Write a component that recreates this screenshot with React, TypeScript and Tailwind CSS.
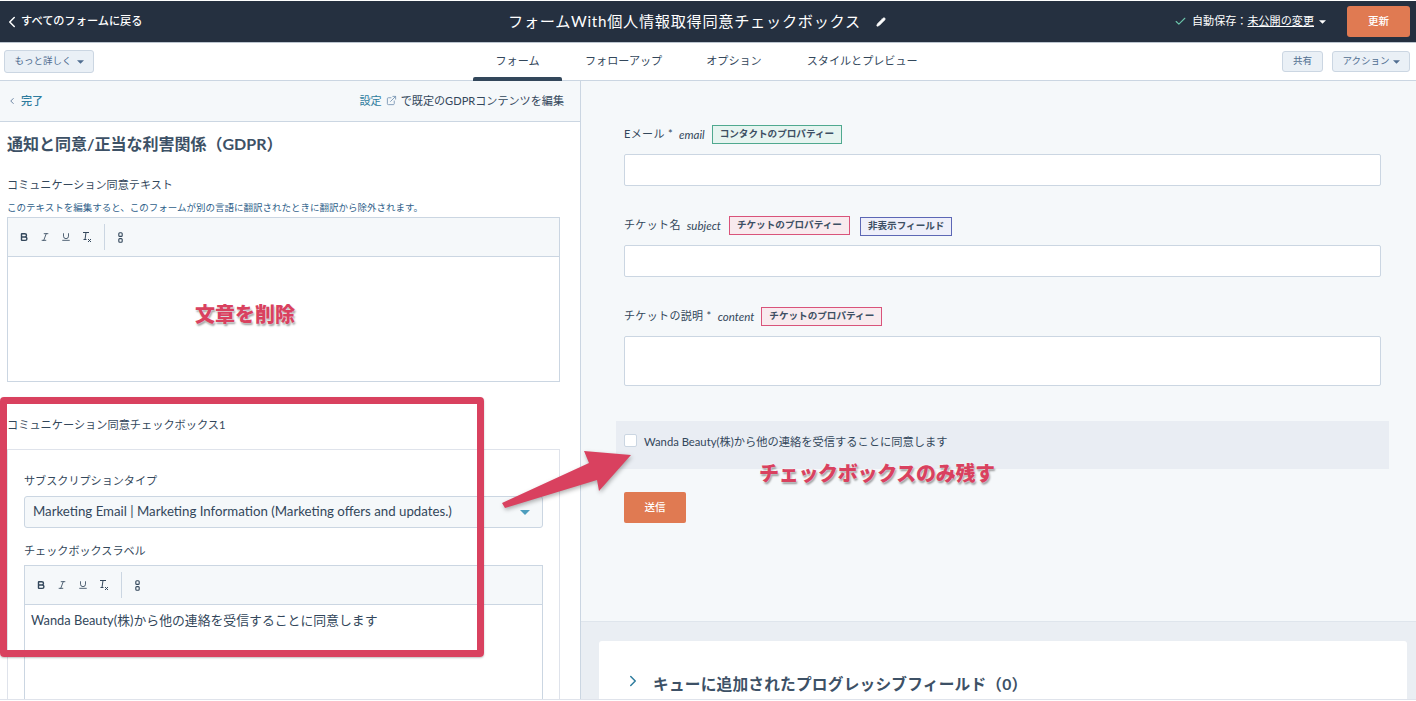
import React from "react";
import { Bold, Italic, Underline, Pencil, Check, ChevronLeft, ChevronRight, ExternalLink } from "lucide-react";

const FONT = "font-['Lato','Noto_Sans_CJK_JP',sans-serif]";

function Caret({ className }: { className: string }) {
  return (
    <svg width="7" height="4" viewBox="0 0 8 4" className={className}>
      <path d="M0 0h8L4 4z" fill="currentColor" />
    </svg>
  );
}

function Toolbar() {
  return (
    <div className="h-[39px] shrink-0 flex items-center bg-[#f5f8fa] border-b border-[#cbd6e2] pl-[5px] text-[#33475b]">
      <div className="w-[21px] flex justify-center"><Bold size={10} strokeWidth={3.4} /></div>
      <div className="w-[21px] flex justify-center"><Italic size={10} strokeWidth={2} /></div>
      <div className="w-[21px] flex justify-center"><Underline size={10} strokeWidth={2} /></div>
      <div className="w-[21px] flex justify-center">
        <svg width="10" height="12" viewBox="0 0 10 12" fill="none" stroke="currentColor" strokeWidth="1">
          <path d="M1 1.5h6M4 1.5L3 8.5M1.5 8.5h3M6 8l3 3M9 8l-3 3" />
        </svg>
      </div>
      <div className="w-px h-[26px] bg-[#cbd6e2] ml-[7px] mr-[13px]" />
      <svg width="5" height="11" viewBox="0 0 5 11" fill="none" stroke="currentColor" strokeWidth="1.1">
        <rect x="0.8" y="0.8" width="3.4" height="3.6" rx="1" />
        <rect x="0.8" y="6.6" width="3.4" height="3.6" rx="1" />
      </svg>
    </div>
  );
}

function Tag({ label, tone, className = "" }: { label: string; tone: "teal" | "pink" | "blue"; className?: string }) {
  const tones = {
    teal: "border-[#4fa98f] bg-[#e6f4f0]",
    pink: "border-[#d9537a] bg-[#f8eaee]",
    blue: "border-[#5c67b5] bg-[#eeeffa]",
  };
  return (
    <span className={`inline-flex h-[19px] items-center justify-center border px-[7px] text-[9.6px] font-bold text-[#3d4f63] whitespace-nowrap ${tones[tone]} ${className}`}>
      {label}
    </span>
  );
}

function FieldLabel({ label, name }: { label: string; name: string }) {
  return (
    <>
      <span className="text-[11px] text-[#33475b] tracking-[0.35px]">{label}</span>
      <span className="ml-[6px] text-[11.5px] italic text-[#33475b]">{name}</span>
    </>
  );
}

export default function App() {
  return (
    <div className={`${FONT} relative w-[1416px] h-[701px] overflow-hidden bg-white flex flex-col`}>
      {/* top bar */}
      <div className="mt-px h-[41px] shrink-0 bg-[#253040] flex items-center relative text-white">
        <div className="flex items-center pl-[3px] w-[500px]">
          <ChevronLeft size={18} strokeWidth={2} />
          <span className="ml-0 text-[11.2px] font-medium">すべてのフォームに戻る</span>
        </div>
        <div className="absolute left-[508px] top-0 h-full flex items-center">
          <span className="text-[15.2px] tracking-[0.7px] whitespace-nowrap">フォームWith個人情報取得同意チェックボックス</span>
          <Pencil size={10} className="ml-[15px]" fill="white" />
        </div>
        <div className="ml-auto flex items-center">
          <Check size={13} strokeWidth={2} className="text-[#6bc4aa]" />
          <span className="ml-[5px] text-[11.1px] whitespace-nowrap">自動保存：<span className="underline">未公開の変更</span></span>
          <Caret className="ml-[5px] text-white" />
          <div className="ml-[21px] mr-[6px] w-[63px] h-[31px] rounded-[3px] bg-[#e07a52] flex items-center justify-center text-[10.5px] font-medium">更新</div>
        </div>
      </div>
      <div className="h-px shrink-0 bg-[#bcc5cf]" />
      {/* tab bar */}
      <div className="h-[38px] shrink-0 bg-white border-b border-[#cbd6e2] flex items-center relative">
        <div className="ml-[4px] w-[90px] h-[23px] rounded-[3px] border border-[#cbd6e2] bg-[#eaf0f6] flex items-center justify-center text-[9.5px] text-[#506e91]">
          もっと詳しく<Caret className="ml-[5px] text-[#506e91]" />
        </div>
        <div className="absolute left-[473px] top-0 h-full flex text-[11.1px] text-[#33475b] whitespace-nowrap">
          <div className="w-[89px] h-full flex items-center justify-center relative">
            フォーム
            <div className="absolute left-0 right-0 bottom-[-1px] h-[4px] rounded-t-[2px] bg-[#33475b]" />
          </div>
          <div className="ml-[23px] h-full flex items-center">フォローアップ</div>
          <div className="ml-[44px] h-full flex items-center">オプション</div>
          <div className="ml-[45px] h-full flex items-center">スタイルとプレビュー</div>
        </div>
        <div className="ml-auto flex items-center mr-[6px]">
          <div className="w-[41px] h-[21px] rounded-[3px] border border-[#cbd6e2] bg-[#eaf0f6] flex items-center justify-center text-[9.5px] text-[#506e91]">共有</div>
          <div className="ml-[9px] w-[78px] h-[21px] rounded-[3px] border border-[#cbd6e2] bg-[#eaf0f6] flex items-center justify-center text-[9.5px] text-[#506e91]">
            アクション<Caret className="ml-[3px] text-[#506e91]" />
          </div>
        </div>
      </div>

      {/* body */}
      <div className="flex flex-1 min-h-0">
        {/* left panel */}
        <div className="w-[581px] shrink-0 border-r border-[#cbd6e2] bg-white overflow-hidden">
          <div className="h-[41px] bg-[#f5f8fa] border-b border-[#cbd6e2] flex items-center px-[7px] text-[11.1px]">
            <ChevronLeft size={10} className="text-[#506e91]" />
            <span className="ml-[4px] text-[#2e7c9e] font-medium">完了</span>
            <span className="ml-auto flex items-center pr-[9px] text-[#33475b]">
              <span className="text-[#2e7c9e]">設定</span>
              <ExternalLink size={11} className="mx-[4px] text-[#7c98b6]" />
              で既定のGDPRコンテンツを編集
            </span>
          </div>
          <div className="pl-[7px] pr-[20px]">
            <h1 className="mt-[11px] text-[16px] leading-[22px] font-bold text-[#3d5166] whitespace-nowrap">通知と同意/正当な利害関係（GDPR）</h1>
            <div className="mt-[22px] text-[11.1px] leading-[16px] text-[#33475b]">コミュニケーション同意テキスト</div>
            <div className="mt-[8px] text-[9.5px] leading-[14px] text-[#2f5f8a] whitespace-nowrap">このテキストを編集すると、このフォームが別の言語に翻訳されたときに翻訳から除外されます。</div>
            <div className="mt-[2px] h-[165px] border border-[#cbd6e2] bg-white flex flex-col">
              <Toolbar />
            </div>
            <div className="mt-[35px] text-[11.2px] leading-[16px] text-[#33475b] whitespace-nowrap">コミュニケーション同意チェックボックス1</div>
            <div className="mt-[16px] border border-[#dfe3eb] border-b-0 px-[16px] pt-[23px] h-[300px]">
              <div className="text-[11.1px] leading-[16px] text-[#33475b]">サブスクリプションタイプ</div>
              <div className="mt-[7px] h-[32px] rounded-[3px] border border-[#cbd6e2] bg-[#f5f8fa] flex items-center pl-[8px] pr-[12px] text-[13.25px] text-[#33475b]">
                <span className="whitespace-nowrap">Marketing Email | Marketing Information (Marketing offers and updates.)</span>
                <Caret className="ml-auto w-[10px] h-[5px] text-[#4d9dbd]" />
              </div>
              <div className="mt-[15px] text-[11.1px] leading-[16px] text-[#33475b]">チェックボックスラベル</div>
              <div className="mt-[6px] h-[200px] border border-[#cbd6e2] bg-white flex flex-col">
                <Toolbar />
                <div className="pl-[6px] pt-[6px] text-[12.85px] leading-[18px] text-[#33475b] whitespace-nowrap">Wanda Beauty(株)から他の連絡を受信することに同意します</div>
              </div>
            </div>
          </div>
        </div>

        {/* right panel */}
        <div className="flex-1 min-w-0 flex flex-col bg-[#eaeef3]">
          <div className="h-[541px] shrink-0 bg-[#f5f8fa] border-b border-[#dfe5ec] pl-[43px] pr-[35px] pt-[44px]">
            <div className="h-[19px] flex items-center">
              <FieldLabel label="Eメール *" name="email" />
              <Tag label="コンタクトのプロパティー" tone="teal" className="ml-[7px]" />
            </div>
            <div className="mt-[10px] h-[32px] rounded-[2px] border border-[#cbd6e2] bg-white" />
            <div className="mt-[30px] h-[19px] flex items-center">
              <FieldLabel label="チケット名" name="subject" />
              <Tag label="チケットのプロパティー" tone="pink" className="ml-[8px]" />
              <Tag label="非表示フィールド" tone="blue" className="ml-[10px] translate-y-px" />
            </div>
            <div className="mt-[10px] h-[32px] rounded-[2px] border border-[#cbd6e2] bg-white" />
            <div className="mt-[30px] h-[19px] flex items-center">
              <FieldLabel label="チケットの説明 *" name="content" />
              <Tag label="チケットのプロパティー" tone="pink" className="ml-[7px]" />
            </div>
            <div className="mt-[10px] h-[50px] rounded-[2px] border border-[#cbd6e2] bg-white" />
            <div className="mt-[35px] -ml-[8px] -mr-[8px] h-[48px] bg-[#e9edf3] pl-[8px] pt-[13px] flex items-start">
              <span className="w-[13px] h-[13px] shrink-0 rounded-[2px] border border-[#cbd6e2] bg-white" />
              <span className="ml-[7px] text-[11.25px] leading-[16px] text-[#33475b] whitespace-nowrap">Wanda Beauty(株)から他の連絡を受信することに同意します</span>
            </div>
            <div className="mt-[23px] w-[62px] h-[31px] rounded-[2px] bg-[#e07a52] flex items-center justify-center text-[10.5px] font-medium text-white">送信</div>
          </div>
          <div className="mt-[19px] ml-[18px] mr-[9px] flex-1 rounded-t-[3px] bg-white flex items-start pl-[28px] pt-[32px]">
            <ChevronRight size={18} strokeWidth={2} className="text-[#2e7c9e] -ml-[3px] -mt-px" />
            <span className="ml-[11px] text-[15.7px] leading-[22px] font-bold text-[#3d5166] whitespace-nowrap tracking-[0.2px]">キューに追加されたプログレッシブフィールド（0）</span>
          </div>
        </div>
      </div>
      <div className="h-[2px] shrink-0 bg-white border-t border-[#dfe3eb]" />

      {/* annotations laid over the screenshot */}
      <div className="absolute left-0 top-[397px] w-[484px] h-[260px] rounded-[4px] border-[7.5px] border-[#d9415f] shadow-[0_1px_2px_rgba(0,0,0,0.25)]" />
      <svg className="absolute left-0 top-0 pointer-events-none" width="1416" height="701" style={{ filter: "drop-shadow(1px 2px 2px rgba(0,0,0,0.3))" }}>
        <polygon points="502,503 589,463 584,451 631,455 599,491 597,480 505,508" fill="#d9415f" />
      </svg>
      <div className="absolute left-[195px] top-[300px] text-[20px] leading-[28px] font-black text-[#d9415f] whitespace-nowrap [text-shadow:0_0_2px_#fff,1px_2px_2px_rgba(0,0,0,0.4)]">文章を削除</div>
      <div className="absolute left-[759px] top-[459px] text-[20px] leading-[28px] font-black text-[#d9415f] whitespace-nowrap tracking-[-0.3px] [text-shadow:0_0_2px_#fff,1px_2px_2px_rgba(0,0,0,0.4)]">チェックボックスのみ残す</div>
    </div>
  );
}
